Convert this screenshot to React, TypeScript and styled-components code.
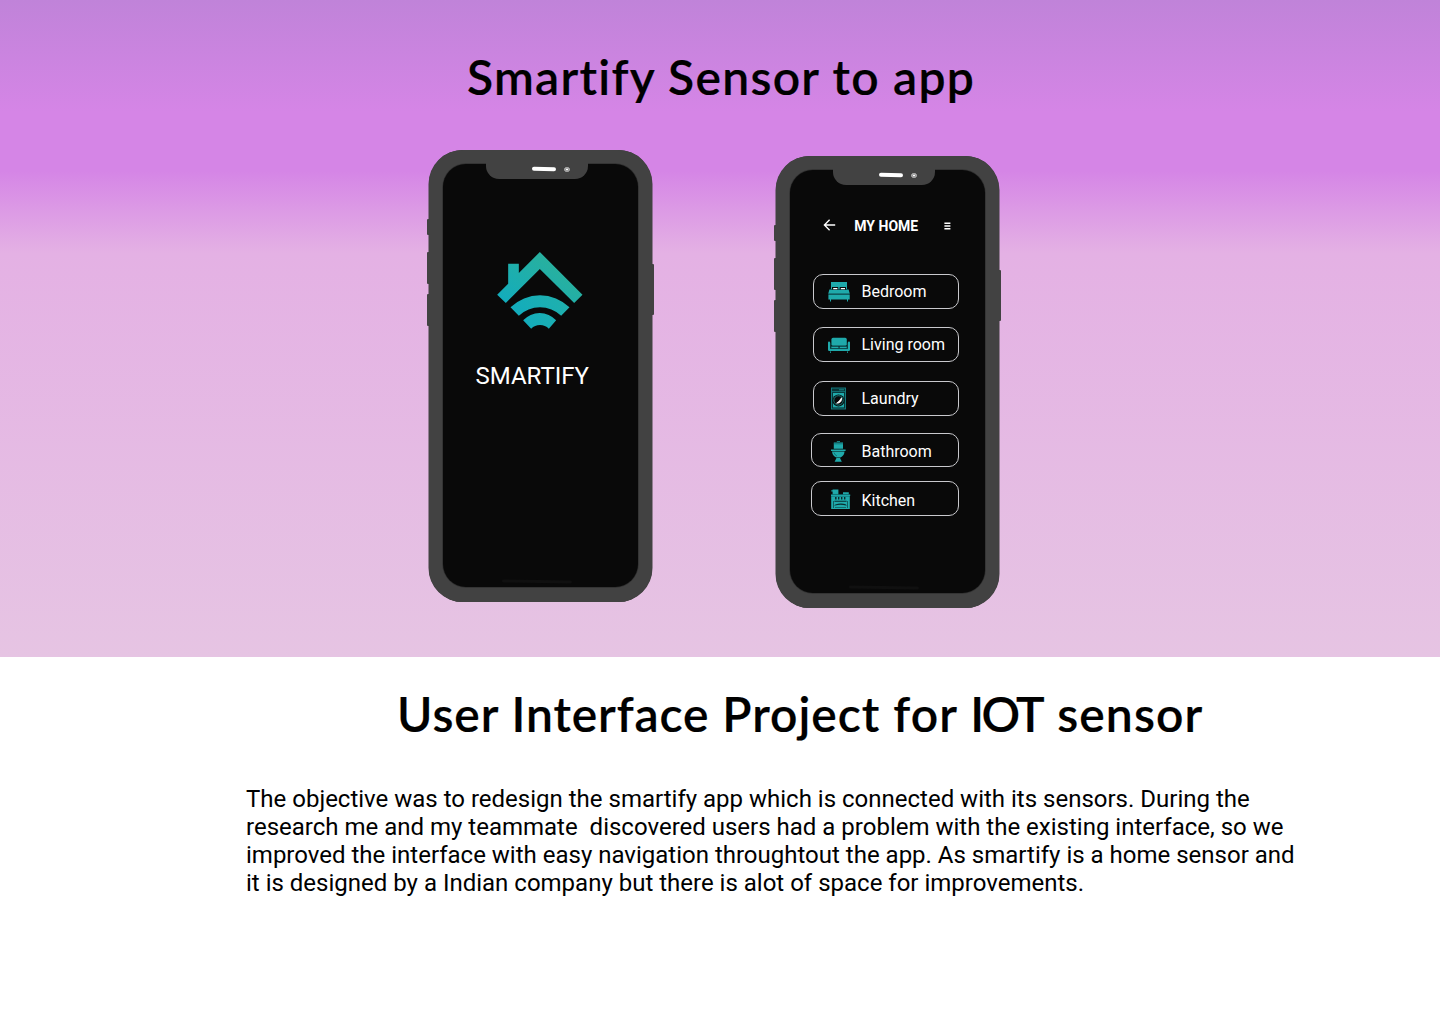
import React from "react";
import styled, { createGlobalStyle } from "styled-components";

const GlobalStyle = createGlobalStyle`
  *, *::before, *::after { box-sizing: border-box; }
  body {
    margin: 0;
    background: #ffffff;
    color: #000000;
    font-family: Roboto, "Liberation Sans", sans-serif;
  }
  h1, h2, p, ul { margin: 0; padding: 0; }
`;

const Page = styled.main`
  width: 1440px;
  height: 1024px;
  overflow: hidden;
  display: flex;
  flex-direction: column;
`;

const Hero = styled.section`
  height: 657px;
  flex: none;
  display: flex;
  flex-direction: column;
  background: linear-gradient(180deg, #c083d9 0%, #d585e6 17%, #d585e6 26%, #e4b1e4 38.5%, #e6c4e3 100%);
`;

const Title = styled.h1`
  font-family: Lato, "Open Sans", sans-serif;
  font-size: 48px;
  line-height: 60px;
  font-weight: 600;
  -webkit-text-stroke: 0.2px #000000;
  white-space: nowrap;
`;

const Word = styled.span<{ $tracking: number }>`
  letter-spacing: ${(p) => p.$tracking}px;
`;

const HeroHeader = styled.header`
  height: 150px;
  padding: 47px 0 0 467px;
`;

const Phones = styled.div`
  display: flex;
  align-items: flex-start;
  gap: 124px;
  padding-left: 429px;
`;

const PhoneFrame = styled.div<{ $drop?: number }>`
  position: relative;
  width: 223px;
  height: 452px;
  margin-top: ${(p) => p.$drop ?? 0}px;
  padding: 14px 14px 15px;
  border-radius: 34px;
  background: #424242;
  box-shadow: -0.5px 0 0 #424242, 0.5px 0 0 #424242;
`;

const SideKey = styled.span<{ $side: "left" | "right"; $top: number; $length: number }>`
  position: absolute;
  ${(p) => p.$side}: -2px;
  top: ${(p) => p.$top}px;
  width: 3px;
  height: ${(p) => p.$length}px;
  border-radius: 1px;
  background: #424242;
`;

const Screen = styled.div`
  position: relative;
  height: 100%;
  border-radius: 23px;
  background: #090909;
  box-shadow: 0 0 0 0.7px #303030;
  display: flex;
  flex-direction: column;
`;

const Notch = styled.div`
  position: absolute;
  top: -1px;
  left: 43px;
  width: 102px;
  height: 16px;
  border-radius: 0 0 13px 13px;
  background: #424242;
  display: flex;
  align-items: center;
  padding: 0 0 4px 46px;
  gap: 8px;
`;

const Speaker = styled.span`
  width: 24px;
  height: 3.6px;
  border-radius: 2px;
  background: #ffffff;
  transform: rotate(0.8deg);
`;

const Lens = styled.span`
  width: 5.6px;
  height: 5.6px;
  margin-top: 1px;
  border: 1.2px solid #a5a5a5;
  border-radius: 50%;
  background: #ffffff;
  box-shadow: inset 0 0 0 0.6px #555555;
`;

const HomeBar = styled.span`
  position: absolute;
  left: 59px;
  bottom: 4px;
  width: 70px;
  height: 2.6px;
  border-radius: 2px;
  background: #101010;
  transform: rotate(0.8deg);
`;

const Splash = styled.div`
  display: flex;
  flex-direction: column;
  align-items: flex-start;
  padding: 88px 0 0 32.5px;
`;

const BrandName = styled.p`
  margin-top: 33px;
  font-size: 24px;
  line-height: 28px;
  color: #ffffff;
`;

const LogoBox = styled.div`
  display: flex;
  padding-left: 21.8px;
`;

const AppBar = styled.div`
  display: flex;
  align-items: center;
  height: 16px;
  margin-top: 48px;
  padding-left: 33px;
  color: #ffffff;
`;

const BackIcon = styled.svg`
  width: 13px;
  height: 12px;
  margin-bottom: 2px;
`;

const AppTitle = styled.p`
  width: 90px;
  margin-left: 18.3px;
  font-size: 14px;
  line-height: 16px;
  font-weight: 700;
  white-space: nowrap;
`;

const RoomList = styled.ul`
  display: flex;
  flex-direction: column;
  align-items: flex-end;
  padding: 0 26px 0 0;
  list-style: none;
`;

const RoomItem = styled.li<{ $width: number; $height: number; $gap: number; $nudge: number }>`
  display: flex;
  align-items: center;
  width: ${(p) => p.$width}px;
  height: ${(p) => p.$height}px;
  margin-top: ${(p) => p.$gap}px;
  padding-top: ${(p) => p.$nudge}px;
  border: 1px solid #c9c9cd;
  border-radius: 10px;
  color: #ffffff;
  font-size: 16px;
  line-height: 18px;
  white-space: nowrap;
`;

const RoomIcon = styled.svg`
  flex: none;
  width: 26px;
  height: 28px;
  margin-left: auto;
  margin-right: 9.5px;
`;

const RoomName = styled.span`
  flex: none;
  width: 96.5px;
`;

const About = styled.section`
  flex: 1;
  display: flex;
  flex-direction: column;
  background: #ffffff;
`;

const AboutHeading = styled.div`
  padding: 27px 0 0 397px;
`;

const Description = styled.p`
  width: 1062px;
  margin: 41px 0 0 246px;
  font-size: 24px;
  line-height: 28px;
  white-space: pre-line;
`;

const TEAL = "#1faaab";

const Logo = () => (
  <svg width="86" height="77" viewBox="231.5 337 258 231">
    <defs>
      <linearGradient id="roof" gradientUnits="userSpaceOnUse" x1="260" y1="500" x2="370" y2="360">
        <stop offset="0" stopColor="#12acbd" />
        <stop offset="1" stopColor="#27b0a0" />
      </linearGradient>
      <linearGradient id="waves" gradientUnits="userSpaceOnUse" x1="290" y1="540" x2="420" y2="460">
        <stop offset="0" stopColor="#12acbd" />
        <stop offset="1" stopColor="#1fb0ad" />
      </linearGradient>
    </defs>
    <path
      fill="url(#roof)"
      d="M360 337 488 465 463 490 360 388 258 490 232 465 265 432V372H297V400Z"
    />
    <path
      fill="url(#waves)"
      d="M272 503A127 127 0 0 1 449 503L424 528A93 93 0 0 0 297 528ZM310 542A67 67 0 0 1 409 542L387 567A37 37 0 0 0 334 567Z"
    />
  </svg>
);

const BackArrow = () => (
  <BackIcon viewBox="0 0 13 12" fill="none" stroke="#fff" strokeWidth="1.35">
    <path d="M12.2 6H1.5M6.6 .8 1.4 6 6.6 11.2" />
  </BackIcon>
);

const MenuLines = () => (
  <svg width="7" height="8" viewBox="0 0 7 8" stroke="#fff" strokeWidth="1.5">
    <path d="M.4 1.2H6.4M.4 4H6.4M.4 6.8H6.4" />
  </svg>
);

const BedArt = () => (
  <g fill={TEAL}>
    <path d="M5 4H21V11H5Z" />
    <path d="M3.4 11.6H22.6L23.8 15.8H2.2Z" />
    <path d="M2.4 16.4H23.7V21.4H2.4ZM4 21.4H5V23.6H4ZM21 21.4H22V23.6H21Z" />
    <path fill="#090909" d="M6 9H12.2V11.4H6ZM13.7 9H20V11.4H13.7Z" />
    <path fill="#fff" d="M7.2 10H11.4V11.2H7.2ZM14.8 10H19V11.2H14.8Z" />
    <path stroke="#0b6268" strokeWidth=".6" d="M2.4 16.1H23.7" />
  </g>
);

const SofaArt = () => (
  <g fill={TEAL}>
    <rect x="5.4" y="6.8" width="15.4" height="8" rx="1.6" />
    <path d="M2 11.6Q2 10.6 3 10.6T4.2 11.6V17.8H21.8V11.6Q22 10.6 23 10.6T24 11.6V18.8Q24 20 22.8 20H3.2Q2 20 2 18.8Z" />
    <path d="M5.2 15.4H12.6V17.2H5.2ZM13.5 15.4H20.8V17.2H13.5ZM4 20.4H5V21.8H4ZM21 20.4H22V21.8H21Z" />
    <path stroke="#064d52" strokeWidth=".6" d="M4.7 12V18M21.4 12V18M4.8 17.6H21.4M5 15.1H21" />
  </g>
);

const WasherArt = () => (
  <g>
    <rect x="5.5" y="3" width="14" height="21" fill="#083638" stroke="#168286" strokeWidth=".9" />
    <path d="M6 6.6H19" stroke="#168286" strokeWidth=".8" />
    <path d="M13 4.8H18" stroke={TEAL} strokeWidth=".7" />
    <rect x="7" y="8" width="11" height="14.4" fill={TEAL} />
    <circle cx="12.5" cy="15.4" r="6" fill="#090909" />
    <circle cx="12.5" cy="15.4" r="4.7" fill="#090909" stroke={TEAL} strokeWidth=".7" />
    <path d="M15.6 12.8Q16 18.4 10.6 18.2Q13.2 16.8 15.6 12.8Z" fill="#fff" stroke="#fff" strokeWidth=".8" />
  </g>
);

const ToiletArt = () => (
  <g fill={TEAL}>
    <path d="M7.8 4.5H17V10.8H7.8ZM10.8 3.2H14V4H10.8Z" />
    <path d="M5 11.5H19.6V13.1H5ZM6 13.5H18.6Q18 18.2 14.4 19.4H10.2Q6.6 18 6 13.5Z" />
    <path d="M10.5 20H14L15.8 23.8H8.6Z" />
    <path stroke="#075257" strokeWidth=".6" fill="none" d="M7.8 5.8H17M8 14.6Q9 17.4 11 18" />
  </g>
);

const StoveArt = () => (
  <g fill={TEAL} transform="translate(0 -1)">
    <path d="M6.6 3.6H12.4V8.3H6.6ZM5.3 4.2H6.6V5.6H5.3ZM17 6.2H22.8V8.3H17ZM5 8.6H24.2V10H5ZM5.2 10H23.8V23H5.2Z" />
    <path
      fill="#092d2f"
      d="M9 11H10.6V13.6H9ZM12 11H13.4V13.6H12ZM15 11H16.4V13.6H15ZM18 11H19.4V13.6H18ZM8.4 14.8H20.6V15.7H8.4ZM8.2 19.6Q9 17.6 14.5 17.4T20.8 19.6L20 19.4Q14.5 18 9 19.4ZM9 21.4H20V22.1H9ZM7.4 15H8V22H7.4ZM21 15H21.6V22H21Z"
    />
    <path stroke="#0b6268" strokeWidth=".5" d="M5 8.4H24M5.2 10.4H23.8" />
  </g>
);

const rooms = [
  { name: "Bedroom", art: <BedArt />, width: 146, height: 35, gap: 40, nudge: 0 },
  { name: "Living room", art: <SofaArt />, width: 146, height: 35, gap: 18, nudge: 1 },
  { name: "Laundry", art: <WasherArt />, width: 146, height: 35, gap: 19, nudge: 1 },
  { name: "Bathroom", art: <ToiletArt />, width: 148, height: 34, gap: 17, nudge: 3 },
  { name: "Kitchen", art: <StoveArt />, width: 148, height: 35, gap: 14, nudge: 4 },
];

const aboutWords: [string, number][] = [
  ["User ", 1],
  ["Interface ", 0.9],
  ["Project ", 1],
  ["for ", 1.1],
  ["IOT", -2.6],
  [" ", 3.2],
  ["sensor", 1.1],
];

type PhoneProps = { drop?: number; children: React.ReactNode };

const Phone = ({ drop, children }: PhoneProps) => (
  <PhoneFrame $drop={drop}>
    <SideKey $side="left" $top={69} $length={16} />
    <SideKey $side="left" $top={102} $length={32} />
    <SideKey $side="left" $top={144} $length={32} />
    <SideKey $side="right" $top={114} $length={51} />
    <Screen>
      <Notch>
        <Speaker />
        <Lens />
      </Notch>
      {children}
      <HomeBar />
    </Screen>
  </PhoneFrame>
);

export default function App() {
  return (
    <Page>
      <GlobalStyle />
      <Hero>
        <HeroHeader>
          <Title>
            <Word $tracking={1.27}>Smartify Sensor to app</Word>
          </Title>
        </HeroHeader>
        <Phones>
          <Phone>
            <Splash>
              <LogoBox>
                <Logo />
              </LogoBox>
              <BrandName>SMARTIFY</BrandName>
            </Splash>
          </Phone>
          <Phone drop={6}>
            <AppBar>
              <BackArrow />
              <AppTitle>MY HOME</AppTitle>
              <MenuLines />
            </AppBar>
            <RoomList>
              {rooms.map((r) => (
                <RoomItem key={r.name} $width={r.width} $height={r.height} $gap={r.gap} $nudge={r.nudge}>
                  <RoomIcon viewBox="0 0 26 28">{r.art}</RoomIcon>
                  <RoomName>{r.name}</RoomName>
                </RoomItem>
              ))}
            </RoomList>
          </Phone>
        </Phones>
      </Hero>
      <About>
        <AboutHeading>
          <Title as="h2">
            {aboutWords.map(([text, tracking]) => (
              <Word key={text} $tracking={tracking}>{text}</Word>
            ))}
          </Title>
        </AboutHeading>
        <Description>
          The objective was to redesign the smartify app which is connected with its sensors. During the
          {"\n"}research me and my teammate{"\u00a0 "}discovered users had a problem with the existing interface, so we
          {"\n"}improved the interface with easy navigation throughtout the app. As smartify is a home sensor and
          {"\n"}it is designed by a Indian company but there is alot of space for improvements.
        </Description>
      </About>
    </Page>
  );
}
